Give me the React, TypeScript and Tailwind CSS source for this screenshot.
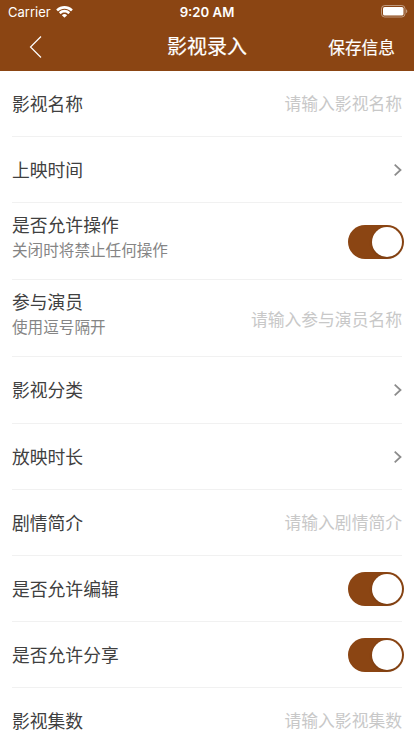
import React from "react";

type Item = {
  label: string;
  hint?: string;
  placeholder?: string;
  kind: "input" | "link" | "switch";
  height: string;
};

const items: Item[] = [
  { label: "影视名称", placeholder: "请输入影视名称", kind: "input", height: "h-[66px]" },
  { label: "上映时间", kind: "link", height: "h-[66px]" },
  { label: "是否允许操作", hint: "关闭时将禁止任何操作", kind: "switch", height: "h-[77px]" },
  { label: "参与演员", hint: "使用逗号隔开", placeholder: "请输入参与演员名称", kind: "input", height: "h-[77px]" },
  { label: "影视分类", kind: "link", height: "h-[67px]" },
  { label: "放映时长", kind: "link", height: "h-[66px]" },
  { label: "剧情简介", placeholder: "请输入剧情简介", kind: "input", height: "h-[66px]" },
  { label: "是否允许编辑", kind: "switch", height: "h-[66px]" },
  { label: "是否允许分享", kind: "switch", height: "h-[66px]" },
  { label: "影视集数", placeholder: "请输入影视集数", kind: "input", height: "h-[66px]" },
];

function Wifi() {
  return (
    <svg className="ml-[5px] h-[12px] w-[17px]" viewBox="0 0 17 12" fill="#fff">
      <path d="M8.500 2.700c2.400 0 4.600.9 6.300 2.500.1.100.3.100.4 0l1.400-1.400c.1-.1.100-.3 0-.5-4.600-4.400-11.600-4.400-16.200 0-.1.200-.1.400 0 .5L1.800 5.200c.1.100.300.100.400 0C3.900 3.600 6.100 2.700 8.500 2.700Z" />
      <path d="M8.500 6.600c1.300 0 2.600.5 3.500 1.400.1.100.300.100.500 0l1.400-1.500c.1-.1.100-.3 0-.4-3.100-3-7.700-3-10.800 0-.1.100-.1.300 0 .4L4.500 8c.2.100.4.100.5 0 .9-.9 2.200-1.400 3.500-1.400Z" />
      <path d="M10.900 9.400c.1-.1.100-.3 0-.4-1.400-1.200-3.400-1.200-4.800 0-.1.100-.1.300 0 .4l2.200 2.200c.1.100.3.100.4 0l2.200-2.200Z" />
    </svg>
  );
}

function Battery() {
  return (
    <svg className="h-[13px] w-[27px]" viewBox="0 0 27 13" fill="none">
      <rect x="0.500" y="0.500" width="23.500" height="11.500" rx="3.200" stroke="#fff" strokeOpacity="0.450" />
      <rect x="2" y="2" width="20.500" height="8.500" rx="1.600" fill="#fff" />
      <path d="M25 4.200c1.800.7 1.800 3.400 0 4.100V4.200Z" fill="#fff" fillOpacity="0.450" />
    </svg>
  );
}

function Toggle() {
  return (
    <div className="-mr-[2px] flex h-[34px] w-[56.500px] shrink-0 items-center justify-end rounded-full bg-[#8b4513] pr-[2px]">
      <div className="size-[30px] rounded-full bg-white shadow-[0_1px_3px_rgba(0,0,0,0.15)]" />
    </div>
  );
}

function Chevron() {
  return (
    <svg className="h-[14px] w-[9px]" viewBox="0 0 9 14" fill="none">
      <path d="M1.700 1.700 7.500 7 1.700 12.300" stroke="#8c8c8c" strokeWidth="1.800" />
    </svg>
  );
}

function Row({ item }: { item: Item }) {
  return (
    <div className={`flex shrink-0 items-center justify-between border-b border-[#f1f1f1] ${item.height}`}>
      <div className={item.hint ? "-mt-[10px]" : "-mt-[2px]"}>
        <div className="text-[17.800px] leading-[26px] text-[#404040]">{item.label}</div>
        {item.hint && <div className="text-[15.600px] leading-[24px] text-[#858585]">{item.hint}</div>}
      </div>
      <div className={item.hint ? "pt-[2px]" : ""}>
        {item.kind === "input" && (
          <div className={`text-[16.800px] leading-[26px] text-[#c8c8c8] ${item.hint ? "" : "-mt-[2px]"}`}>{item.placeholder}</div>
        )}
        {item.kind === "link" && <Chevron />}
        {item.kind === "switch" && <Toggle />}
      </div>
    </div>
  );
}

export default function App() {
  return (
    <div className="flex h-[736px] w-[414px] flex-col overflow-hidden bg-white font-['Noto_Sans_CJK_SC',sans-serif]">
      <header className="h-[71px] shrink-0 bg-[#8b4513] text-white">
        <div className="grid h-[24px] grid-cols-3 items-center pl-[8px] pr-[6px] font-['Inter',sans-serif]">
          <div className="flex items-center text-[13px] leading-[23px]">
            Carrier
            <Wifi />
          </div>
          <div className="-ml-[2px] text-center text-[13.200px] font-semibold leading-[23px]">9:20 AM</div>
          <div className="-mt-[2px] flex justify-end">
            <Battery />
          </div>
        </div>
        <div className="grid h-[45px] grid-cols-3 items-center pl-[29px] pr-[19px]">
          <svg className="h-[24px] w-[14px]" viewBox="0 0 14 24" fill="none">
            <path d="M12 1.500 1.500 12 12 22.500" stroke="#fff" strokeWidth="1.200" />
          </svg>
          <div className="-ml-[10px] -mt-[2px] text-center text-[20px] leading-[30px] [-webkit-text-stroke:0.2px_white]">影视录入</div>
          <div className="text-right text-[16.700px] leading-[26px] [-webkit-text-stroke:0.2px_white]">保存信息</div>
        </div>
      </header>
      <main className="flex flex-col px-[12px]">
        {items.map((item) => (
          <Row key={item.label} item={item} />
        ))}
      </main>
    </div>
  );
}
